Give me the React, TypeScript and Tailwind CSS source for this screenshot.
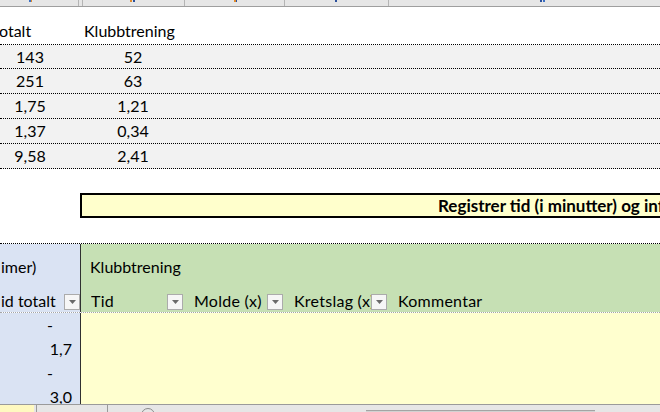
import React from "react";

function Drop() {
  return (
    <div className="w-[16px] h-[16px] shrink-0 border border-[#ababab] bg-[#f6f6f6] flex items-center justify-center mt-[3px]">
      <svg width="7" height="4" viewBox="0 0 7 4">
        <path d="M0 0h7L3.5 4z" fill="#6a6a6a" />
      </svg>
    </div>
  );
}

function HeadCell({ label, w, last }: { label: string; w?: string; last?: boolean }) {
  return (
    <div className={`${w ?? ""} ${last ? "flex-1" : "shrink-0"} flex items-start pl-[10px] pr-[1px]`}>
      <div className="flex-1 overflow-hidden whitespace-nowrap tracking-[0.25px]">{label}</div>
      {!last && <Drop />}
    </div>
  );
}

const rows = [
  ["143", "52"],
  ["251", "63"],
  ["1,75", "1,21"],
  ["1,37", "0,34"],
  ["9,58", "2,41"],
];

const dataRows = [
  { v: "-", dash: true },
  { v: "1,7", dash: false },
  { v: "-", dash: true },
  { v: "3,0", dash: false },
];

export default function App() {
  return (
    <div className="w-[660px] h-[412px] overflow-hidden bg-white text-black font-['Lato','Liberation_Sans',sans-serif] text-[16px] leading-[20px] flex flex-col">
      {/* top strip (column headers cut off) */}
      <div className="relative h-[7px] shrink-0 bg-[#e6e6e6] border-b border-[#9e9e9e] flex">
        <div className="w-[79px] border-r border-[#b4b4b4]" />
        <div className="w-[4px] border-r border-[#b4b4b4]" />
        <div className="w-[102px] border-r border-[#b4b4b4]" />
        <div className="w-[100px] border-r border-[#b4b4b4]" />
        <div className="w-[104px] border-r border-[#b4b4b4]" />
        <div className="flex-1" />
        <span className="absolute left-[29px] top-0 w-[2px] h-[2px] bg-[#3a6fc4]" />
        <span className="absolute left-[31px] top-0 w-[1px] h-[2px] bg-[#e08a2a]" />
        <span className="absolute left-[130px] top-0 w-[2px] h-[2px] bg-[#e08a2a]" />
        <span className="absolute left-[133px] top-0 w-[2px] h-[2px] bg-[#2a4f9c]" />
        <span className="absolute left-[234px] top-0 w-[2px] h-[2px] bg-[#e08a2a]" />
        <span className="absolute left-[236px] top-0 w-[1px] h-[2px] bg-[#2a4f9c]" />
        <span className="absolute left-[335px] top-0 w-[2px] h-[2px] bg-[#2a4f9c]" />
        <span className="absolute left-[540px] top-0 w-[2px] h-[2px] bg-[#2a4f9c]" />
        <span className="absolute left-[543px] top-0 w-[2px] h-[2px] bg-[#3a6fc4]" />
      </div>

      {/* summary header */}
      <div className="h-[37px] shrink-0 pt-[14px] flex whitespace-nowrap">
        <div className="w-[85px] -ml-[1px]">otalt</div>
        <div>Klubbtrening</div>
      </div>

      {/* summary rows */}
      <div className="shrink-0 border-t border-dotted border-black">
        {rows.map((r, i) => (
          <div
            key={i}
            className={`${i === 0 ? "h-[24px]" : "h-[25px]"} bg-[#f2f2f2] border-b border-dotted border-black flex items-center`}
          >
            <div className="-ml-[22px] w-[104px] text-center">{r[0]}</div>
            <div className="w-[102px] text-center">{r[1]}</div>
          </div>
        ))}
      </div>

      <div className="h-[24px] shrink-0" />

      {/* yellow title box */}
      <div className="h-[25px] shrink-0 ml-[80px] border-2 border-r-0 border-black bg-[#ffffcc] flex items-center pl-[356px] pt-[1px] text-[17px] font-bold whitespace-nowrap overflow-hidden">
        Registrer tid (i minutter) og informasjon
      </div>

      <div className="h-[25px] shrink-0" />

      {/* table header */}
      <div className="shrink-0 flex border-t border-dotted border-black border-b border-b-[#a6a6a6]">
        <div className="w-[81px] shrink-0 bg-[#dae3f3] border-r border-[#303030] flex flex-col whitespace-nowrap">
          <div className="h-[38px] pt-[13px] pl-[1px]">imer)</div>
          <div className="h-[30px] pt-[9px] flex items-start">
            <div className="flex-1 overflow-hidden pl-[1px]">id totalt</div>
            <Drop />
          </div>
        </div>
        <div className="flex-1 bg-[#c6e0b4] flex flex-col whitespace-nowrap">
          <div className="h-[38px] pt-[13px] pl-[9px]">Klubbtrening</div>
          <div className="h-[30px] pt-[9px] flex">
            <HeadCell label="Tid" w="w-[103px]" />
            <HeadCell label="Molde (x)" w="w-[100px]" />
            <HeadCell label="Kretslag (x)" w="w-[104px]" />
            <HeadCell label="Kommentar" last />
          </div>
        </div>
      </div>

      {/* data rows */}
      <div className="h-[91px] shrink-0 flex overflow-hidden">
        <div className="w-[81px] shrink-0 bg-[#dae3f3] border-r border-[#303030] flex flex-col">
          {dataRows.map((d, i) => (
            <div
              key={i}
              className={`h-[24px] shrink-0 flex items-center justify-end ${d.dash ? "pr-[27px]" : "pr-[8px]"}`}
            >
              {d.v}
            </div>
          ))}
        </div>
        <div className="flex-1 bg-[#ffffcf]" />
      </div>

      {/* sheet tab bar */}
      <div className="flex-1 bg-[#e6e6e6] border-t border-[#9a9a9a] flex">
        <div className="w-[34px] shrink-0 bg-[#fff9c0]" />
        <div className="w-[2px] shrink-0" />
        <div className="w-px shrink-0 bg-[#9a9a9a]" />
        <div className="w-[70px] shrink-0" />
        <div className="w-px shrink-0 bg-[#9a9a9a]" />
        <div className="w-[33px] shrink-0" />
        <div className="w-[14px] h-[14px] shrink-0 mt-[3px] rounded-full border border-[#8a8a8a]" />
        <div className="w-[211px] shrink-0" />
        <div className="w-[229px] h-[4px] shrink-0 mt-[5px] border-t border-[#a4a4a4] bg-[#d2d2d2]" />
      </div>
    </div>
  );
}
